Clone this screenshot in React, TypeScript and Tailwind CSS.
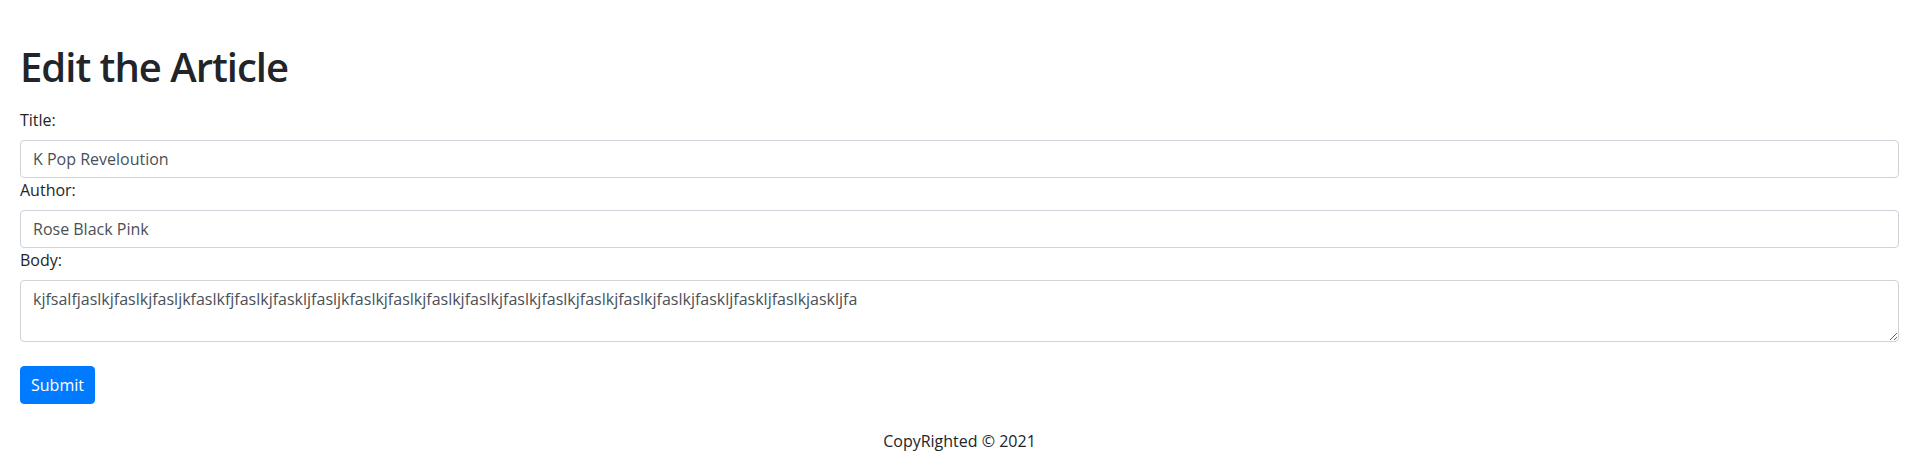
import { useState } from "react";

const bodyText =
  "kjfsalfjaslkjfaslkjfasljkfaslkfjfaslkjfaskljfasljkfaslkjfaslkjfaslkjfaslkjfaslkjfaslkjfaslkjfaslkjfaslkjfaskljfaskljfaslkjaskljfa";

export default function App() {
  // form state ==========================
  const [title, setTitle] = useState("K Pop Reveloution");
  const [author, setAuthor] = useState("Rose Black Pink");
  const [body, setBody] = useState(bodyText);

  const inputCls =
    "block w-full h-[38px] px-3 text-base leading-6 text-[#495057] bg-white border border-[#ced4da] rounded outline-none";

  //================ render ================
  return (
    <div className="px-5 text-[#212529] font-['Open_Sans',sans-serif]">
      <h1 className="pt-[43px] mb-[17px] text-[40px] leading-[48px] font-semibold tracking-[-1px]">
        Edit the Article
      </h1>
      <form onSubmit={(e) => e.preventDefault()}>
        <label className="block text-base leading-6 mb-2">Title:</label>
        <input className={inputCls} value={title} onChange={(e) => setTitle(e.target.value)} />

        <label className="block text-base leading-6 mb-2">Author:</label>
        <input className={inputCls} value={author} onChange={(e) => setAuthor(e.target.value)} />

        <label className="block text-base leading-6 mb-2">Body:</label>
        <textarea
          rows={2}
          className="block w-full h-[62px] px-3 py-1.5 text-base leading-6 text-[#495057] bg-white border border-[#ced4da] rounded outline-none"
          value={body}
          onChange={(e) => setBody(e.target.value)}
        />

        <button
          type="submit"
          className="mt-6 h-[38px] px-[10px] text-base leading-6 text-white bg-[#007bff] border border-[#007bff] rounded"
        >
          Submit
        </button>
      </form>
      <footer className="mt-[25px] text-center text-base leading-6">CopyRighted © 2021</footer>
    </div>
  );
}
